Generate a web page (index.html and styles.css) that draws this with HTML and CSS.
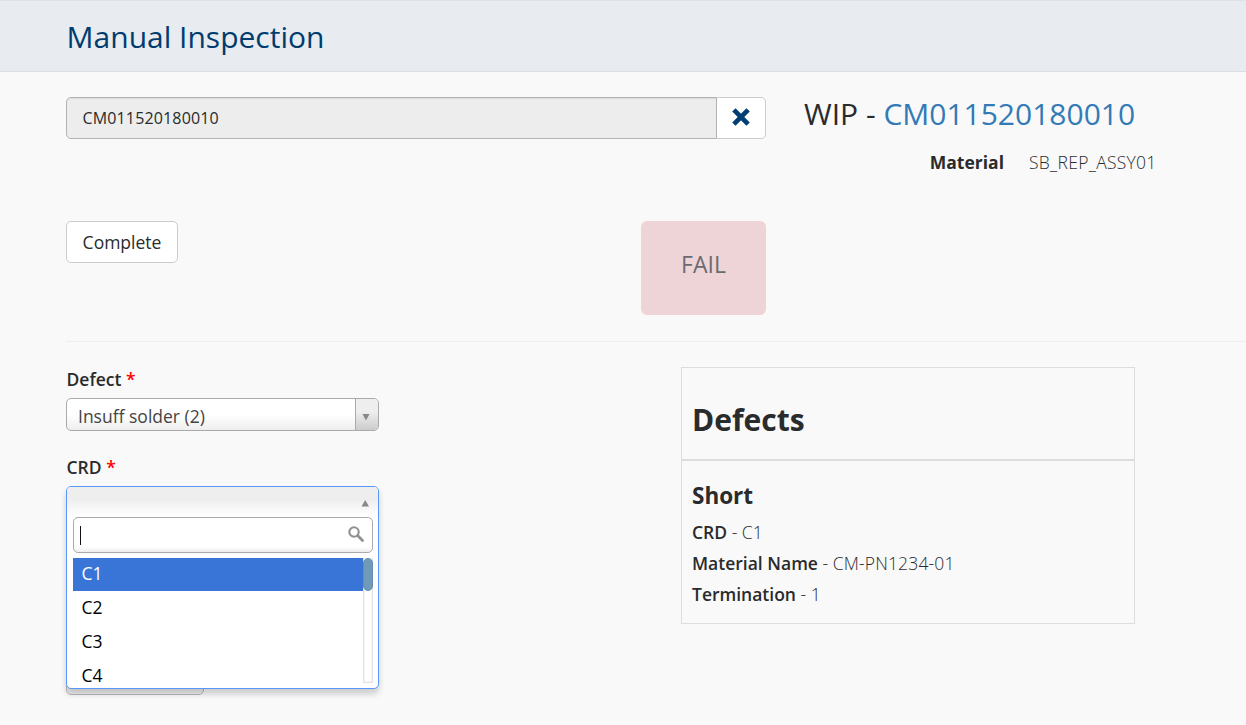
FILE: index.html
```html
<!DOCTYPE html>
<html lang="en">
<head>
<meta charset="utf-8">
<title>Manual Inspection</title>
<link rel="stylesheet" href="styles.css">
</head>
<body>
<header class="page-header"><h1 class="page-title">Manual Inspection</h1></header>
<main class="content">
  <section class="top-row">
    <div class="scan-column">
      <div class="input-group">
        <div class="scan-input">CM011520180010</div>
        <button class="clear-button" type="button" aria-label="Clear">
          <svg width="20" height="20" viewBox="0 0 20 20"><path d="M2.9 2.9 17.1 17.1M17.1 2.9 2.9 17.1" stroke="#003e74" stroke-width="4.8"/></svg>
        </button>
      </div>
      <div class="actions">
        <button class="complete-button" type="button">Complete</button>
        <div class="fail-badge">FAIL</div>
      </div>
    </div>
    <div class="wip-column">
      <h2 class="wip-title">WIP - <a class="wip-link">CM011520180010</a></h2>
      <dl class="wip-details">
        <dt class="detail-name">Material</dt>
        <dd class="detail-value">SB_REP_ASSY01</dd>
      </dl>
    </div>
  </section>
  <section class="bottom-row">
    <form class="defect-form">
      <div class="field-label">Defect <span class="required">*</span></div>
      <div class="select">
        <span class="select-value">Insuff solder (2)</span>
        <span class="select-arrow"><svg width="8" height="7" viewBox="0 0 8 7"><path d="M.5 0H7.5L4 6.5Z" fill="#888"/></svg></span>
      </div>
      <div class="field-label label-crd">CRD <span class="required">*</span></div>
      <div class="crd-field">
        <div class="dropdown">
          <div class="dropdown-head"><svg width="8" height="7" viewBox="0 0 8 7"><path d="M.5 6.5H8L4.2 0Z" fill="#888"/></svg></div>
          <div class="search-box">
            <span class="caret"></span>
            <svg width="16" height="16" viewBox="0 0 16 16" fill="none" stroke="#919191"><circle cx="6" cy="6" r="4.7" stroke-width="2.1"/><path d="M9.6 9.5 14.5 14.4" stroke-width="2.8" stroke-linecap="round"/></svg>
          </div>
          <div class="results">
            <ul class="option-list">
              <li class="option selected">C1</li>
              <li class="option">C2</li>
              <li class="option">C3</li>
              <li class="option">C4</li>
            </ul>
            <div class="scroll-track"><div class="scroll-thumb"></div></div>
          </div>
        </div>
      </div>
      <div class="covered-button"></div>
    </form>
    <section class="defects-panel">
      <div class="panel-head"><h2 class="panel-title">Defects</h2></div>
      <div class="panel-body">
        <h3 class="defect-title">Short</h3>
        <p class="defect-line"><b class="defect-key">CRD</b> - C1</p>
        <p class="defect-line"><b class="defect-key">Material Name</b> - <span class="part-number">CM-PN1234-01</span></p>
        <p class="defect-line"><b class="defect-key">Termination</b> - 1</p>
      </div>
    </section>
  </section>
</main>
</body>
</html>
```
FILE: styles.css
```css
* { box-sizing: border-box; }
body { margin: 0; height: 725px; overflow: hidden; background: #f9f9f9; color: #292b2c; font: 300 17.5px "Open Sans", sans-serif; }
h1, h2, h3, p, ul, dl, dd { margin: 0; padding: 0; font-weight: inherit; }
button { font: inherit; color: inherit; padding: 0; }
svg { display: block; }
.page-header { height: 72px; background: #e8ebf0; border-top: 1px solid #dfe2e6; border-bottom: 1px solid #dcdfe2; padding-left: 66.6px; }
.page-title { font-size: 30px; font-weight: 400; line-height: 71px; color: #003c6e; }
.content { padding: 25px 0 0 66px; }
.top-row { display: flex; gap: 38px; height: 245px; border-bottom: 1px solid #eee; }
.scan-column { width: 700px; }
.input-group { display: flex; height: 42px; }
.scan-input { flex: 1; display: flex; align-items: center; padding: 0 15.5px; font-size: 16px; font-weight: 400; letter-spacing: .15px; background: #ededed; border: 1px solid #b3b3b3; border-radius: 5px 0 0 5px; box-shadow: inset 0 1px 1px rgba(0,0,0,.08); }
.clear-button { width: 49px; display: grid; place-items: center; padding-bottom: 2px; background: #fff; border: 1px solid #ccc; border-left: 0; border-radius: 0 5px 5px 0; }
.actions { display: flex; justify-content: space-between; align-items: flex-start; margin-top: 82px; }
.complete-button { width: 112px; height: 42px; background: #fff; border: 1px solid #ccc; border-radius: 5px; font-weight: 400; }
.fail-badge { width: 125px; height: 94px; padding-top: 26px; text-align: center; line-height: 34px; font-size: 23px; font-weight: 400; border-radius: 6px; background: #eed4d7; color: #6a6a70; }
.wip-title { font-size: 30px; font-weight: 400; line-height: 33px; white-space: pre; }
.wip-link { color: #337ab7; }
.wip-details { display: flex; gap: 25px; margin-top: 20px; line-height: 24px; }
.detail-name { width: 200px; text-align: right; font-weight: 700; }
.detail-value { letter-spacing: .28px; }
.part-number { letter-spacing: .16px; }
.bottom-row { display: flex; justify-content: space-between; width: 1069px; padding-top: 25px; }
.defect-form { width: 313px; }
.field-label { height: 31px; line-height: 24px; font-weight: 600; padding-left: .5px; }
.label-crd { margin-top: 24px; }
.required { color: #f00; }
.select { display: flex; height: 33px; border: 1px solid #aaa; border-radius: 5px; overflow: hidden; background: linear-gradient(to top, #eee 0, #fff 50%); }
.select-value { flex: 1; padding: 2px 0 0 11px; line-height: 31px; color: #444; font-weight: 400; }
.select-arrow { width: 23px; padding: 6px 2px 0 0; display: grid; place-items: center; border-left: 1px solid #aaa; background: linear-gradient(to top, #ccc 0, #eee 60%); }
.crd-field { position: relative; height: 176px; }
.dropdown { position: absolute; inset: 0 0 auto; height: 203px; border: 1px solid #5897fb; border-radius: 5px; background: #fff; box-shadow: 0 5px 6px rgba(0,0,0,.18); padding: 0 5px 0 6px; }
.dropdown-head { height: 30px; margin: 0 -5px 0 -6px; padding: 13px 9px 0; display: flex; justify-content: flex-end; border-radius: 4px 4px 0 0; background: linear-gradient(#eee 40%, #fff); }
.search-box { height: 36px; padding: 8px 8px 0 6px; display: flex; justify-content: space-between; border: 1px solid #aaa; border-radius: 5px; background: linear-gradient(#fff 85%, #eee 99%); }
.caret { width: 1px; height: 19px; background: #111; }
.results { display: flex; height: 131px; margin-top: 5px; overflow: hidden; }
.option-list { flex: 1; list-style: none; color: #000; font-weight: 400; }
.option { height: 33px; margin-bottom: 1px; padding: 0 8.6px; line-height: 30px; }
.selected { background: #3875d7; color: #fff; }
.scroll-track { width: 10px; height: 125px; border: solid #e2e2e2; border-width: 0 1px 1px; box-shadow: inset 0 0 2px #ddd; }
.scroll-thumb { width: 10px; height: 33px; margin-left: -1px; border: 1px solid #668fac; border-radius: 5px; background: #7199b8; }
.covered-button { width: 138px; height: 33px; border: 1px solid #bbb; border-radius: 5px; background: #eee; }
.defects-panel { width: 454px; height: 257px; border: 1px solid #ddd; }
.panel-head { height: 93px; padding: 32px 10px 0; border-bottom: 2px solid #ddd; }
.panel-title { font-size: 30px; line-height: 40px; font-weight: 700; }
.panel-body { padding: 19px 10px; }
.defect-title { font-size: 22.5px; line-height: 32px; margin-bottom: 5px; font-weight: 700; }
.defect-line { height: 31px; line-height: 31px; }
.defect-key { font-weight: 600; }
```
